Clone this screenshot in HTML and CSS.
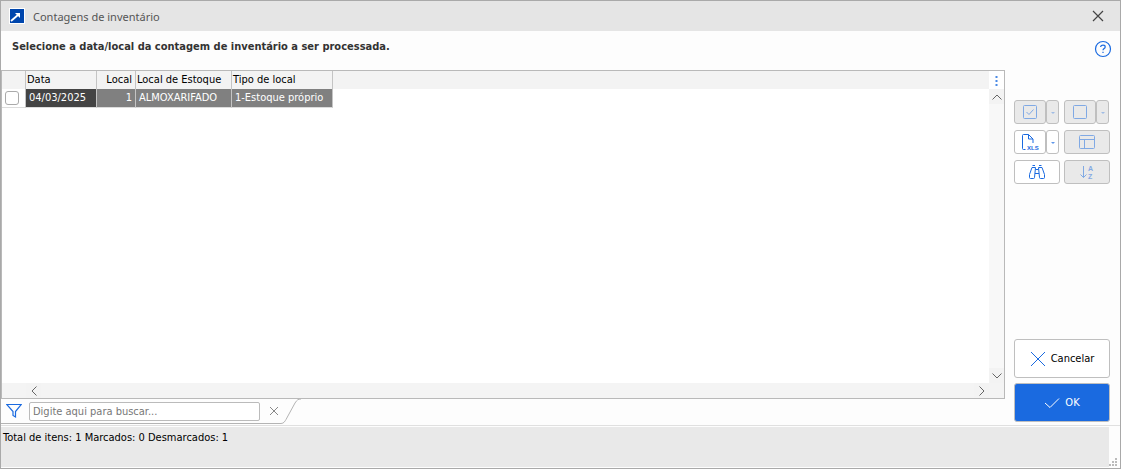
FILE: index.html
```
<!DOCTYPE html>
<html lang="pt-BR">
<head>
    <meta charset="UTF-8">
    <meta name="viewport" content="width=device-width, initial-scale=1.0">
    <title>Contagens de inventário</title>
    <link rel="stylesheet" href="styles.css">
</head>
<body>
    <div class="window">
        <header class="titlebar">
            <svg class="app-icon" width="16" height="16" viewBox="0 0 16 16">
                <rect width="16" height="16" fill="#fff"/>
                <rect x="1" y="1" width="14" height="14" fill="#0046ad"/>
                <path d="M2 13L9.500 6.500" stroke="#fff" stroke-width="1.800" fill="none"/>
                <path d="M6 5h5v5z" fill="#fff"/>
            </svg>
            <h1>Contagens de inventário</h1>
            <button class="close-btn" type="button" aria-label="Fechar">
                <svg width="12" height="12" viewBox="0 0 12 12"><path d="M1 1l10 10M11 1L1 11" stroke="#444" stroke-width="1.200"/></svg>
            </button>
        </header>

        <div class="content">
            <main class="main">
                <p class="prompt">Selecione a data/local da contagem de inventário a ser processada.</p>

                <div class="grid">
                    <div class="grid-view">
                        <div class="grid-data">
                            <table>
                                <thead>
                                    <tr>
                                        <th class="col-check"></th>
                                        <th class="col-date">Data</th>
                                        <th class="col-local num">Local</th>
                                        <th class="col-stock">Local de Estoque</th>
                                        <th class="col-type">Tipo de local</th>
                                    </tr>
                                </thead>
                                <tbody>
                                    <tr>
                                        <td class="check-cell"><input type="checkbox" aria-label="Marcar 04/03/2025"></td>
                                        <td class="focused">04/03/2025</td>
                                        <td class="num">1</td>
                                        <td>ALMOXARIFADO</td>
                                        <td>1-Estoque próprio</td>
                                    </tr>
                                </tbody>
                            </table>
                        </div>
                        <div class="vscroll">
                            <button class="grid-menu" type="button" aria-label="Colunas">
                                <svg width="3" height="12" viewBox="0 0 3 12" fill="#4a8ae6"><path d="M0.500 2h2v2h-2zM0.500 6h2v2h-2zM0.500 10h2v2h-2z"/></svg>
                            </button>
                            <button class="scroll-btn" type="button" aria-label="Rolar para cima">
                                <svg width="10" height="6" viewBox="0 0 10 6"><path d="M0.500 5.500L5 1l4.500 4.500"/></svg>
                            </button>
                            <div class="track"></div>
                            <button class="scroll-btn" type="button" aria-label="Rolar para baixo">
                                <svg width="10" height="6" viewBox="0 0 10 6"><path d="M0.500 0.500L5 5l4.500-4.500"/></svg>
                            </button>
                        </div>
                    </div>
                    <div class="hscroll">
                        <button class="scroll-btn" type="button" aria-label="Rolar para a esquerda">
                            <svg width="6" height="10" viewBox="0 0 6 10"><path d="M5.500 0.500L1 5l4.500 4.500"/></svg>
                        </button>
                        <div class="track"></div>
                        <button class="scroll-btn" type="button" aria-label="Rolar para a direita">
                            <svg width="6" height="10" viewBox="0 0 6 10"><path d="M0.500 0.500L5 5L0.500 9.500"/></svg>
                        </button>
                    </div>
                </div>

                <form class="filter">
                    <div class="filter-body">
                        <svg width="16" height="16" viewBox="0 0 16 16" fill="none" stroke="#1a6ae0" stroke-width="1.200"><path d="M0.700 1.500h14.600L9.500 8.500v5.500l-2.500-1.500V8.500z"/></svg>
                        <input class="search" type="text" aria-label="Buscar" placeholder="Digite aqui para buscar...">
                        <button class="clear-btn" type="button" aria-label="Limpar busca">
                            <svg width="10" height="10" viewBox="0 0 10 10"><path d="M1 1l8 8M9 1L1 9" stroke="#888"/></svg>
                        </button>
                    </div>
                    <svg class="filter-edge" width="20" height="25" viewBox="0 0 20 25" fill="none" stroke="#b4b4b4"><path d="M0 24.500C3 24.500 4 22 5 20.500L14 4C16 1 17 0 20 0"/></svg>
                </form>
            </main>

            <aside class="side">
                <button class="help-btn" type="button" aria-label="Ajuda">
                    <svg width="18" height="18" viewBox="0 0 18 18" fill="none" stroke="#1a6ae0"><circle cx="9" cy="9" r="7.500" stroke-width="1.200"/><path d="M6.700 7V6.500Q7 5.200 9 5.200Q11.200 5.200 11.200 7Q11.200 8 10 8.600Q9 9.100 9 10.300M9 11.700V13" stroke-width="1.200"/></svg>
                </button>

                <div class="tools">
                    <div class="split">
                        <button class="tool" type="button" aria-label="Marcar todos" disabled>
                            <svg width="16" height="16" viewBox="0 0 16 16"><rect x="1.500" y="1.500" width="13" height="13" rx="1"/><path d="M4.500 8l2.500 2.500L11.500 5.500"/></svg>
                        </button>
                        <button class="arrow" type="button" aria-label="Opções de marcar" disabled><svg width="4" height="3" viewBox="0 0 4 3"><path class="solid" d="M0 1h4L2 3z"/></svg></button>
                    </div>
                    <div class="split">
                        <button class="tool" type="button" aria-label="Desmarcar todos" disabled>
                            <svg width="16" height="16" viewBox="0 0 16 16"><rect x="1.500" y="1.500" width="13" height="13" rx="1"/></svg>
                        </button>
                        <button class="arrow" type="button" aria-label="Opções de desmarcar" disabled><svg width="4" height="3" viewBox="0 0 4 3"><path class="solid" d="M0 1h4L2 3z"/></svg></button>
                    </div>
                    <div class="split">
                        <button class="tool" type="button" aria-label="Exportar XLS">
                            <svg width="18" height="18" viewBox="0 0 18 18"><path d="M4.500 16.500H2.500Q1.500 16.500 1.500 15.500V2.500Q1.500 1.500 2.500 1.500H7.500l4.500 4.500V10M7.500 1.500V6H12"/><text x="6" y="17">XLS</text></svg>
                        </button>
                        <button class="arrow" type="button" aria-label="Opções de exportação"><svg width="4" height="3" viewBox="0 0 4 3"><path class="solid" d="M0 1h4L2 3z"/></svg></button>
                    </div>
                    <button class="tool" type="button" aria-label="Layout" disabled>
                        <svg width="16" height="16" viewBox="0 0 16 16"><rect x="0.500" y="1.500" width="15" height="13" rx="1"/><path d="M0.500 5.500h15M5.500 5.500v9"/></svg>
                    </button>
                    <button class="tool" type="button" aria-label="Localizar">
                        <svg width="18" height="16" viewBox="0 0 18 16"><path d="M4 3.500L1.500 10.500V13.500Q1.500 14.500 2.500 14.500H5.500Q6.500 14.500 6.500 13.500L7.500 3.500zM14 3.500l2.500 7V13.500Q16.500 14.500 15.500 14.500H12.500Q11.500 14.500 11.500 13.500L10.500 3.500zM4.500 1.500h2.500M11 1.500h2.500M7.500 5.500h3M7 9.500h4"/></svg>
                    </button>
                    <button class="tool" type="button" aria-label="Ordenar" disabled>
                        <svg width="16" height="18" viewBox="0 0 16 18"><path d="M4.500 3v11.500M1.500 11.500l3 3 3-3"/><text x="9" y="8">A</text><text x="9" y="16">Z</text></svg>
                    </button>
                </div>

                <div class="actions">
                    <button class="btn" type="button">
                        <svg width="16" height="16" viewBox="0 0 16 16"><path d="M1 1l14 14M15 1L1 15"/></svg>Cancelar
                    </button>
                    <button class="btn primary" type="button">
                        <svg width="16" height="16" viewBox="0 0 16 16"><path d="M1 8l5 4.500L15 3.500"/></svg>OK
                    </button>
                </div>
            </aside>
        </div>

        <footer class="status">
            <div class="status-text">Total de itens: 1 Marcados: 0 Desmarcados: 1</div>
            <svg width="9" height="9" viewBox="0 0 9 9" fill="#bbb"><path d="M6 0h2v2h-2zM3 3h2v2h-2zM6 3h2v2h-2zM0 6h2v2h-2zM3 6h2v2h-2zM6 6h2v2h-2z"/></svg>
        </footer>
    </div>
</body>
</html>
```

FILE: styles.css
```
* {
    box-sizing: border-box;
}
body {
    margin: 0;
    padding: 0 14px 7px 0;
    height: 100vh;
    background-color: #fff;
    color: #000;
    font-family: Tahoma, "DejaVu Sans Condensed", "Noto Sans", sans-serif;
    font-size: 11px;
}
button, input {
    font: inherit;
    color: inherit;
    margin: 0;
}
button {
    display: flex;
    align-items: center;
    justify-content: center;
    padding: 0;
    border: none;
    background: none;
}
svg {
    display: block;
    flex: none;
}
.window {
    display: flex;
    flex-direction: column;
    height: 100%;
    border: 1px solid #a9a9a9;
    background-color: #fdfdfd;
}
.titlebar {
    display: flex;
    align-items: center;
    gap: 8px;
    height: 30px;
    padding: 0 14px 0 8px;
    background-color: #e5e5e5;
}
.titlebar h1 {
    flex: 1;
    margin: 0;
    color: #555;
    font-family: "Segoe UI", "Noto Sans", sans-serif;
    font-size: 11px;
    font-weight: normal;
}
.close-btn {
    width: 16px;
    height: 16px;
}
.content {
    display: flex;
    flex: 1;
    min-height: 0;
}
.main {
    display: flex;
    flex: 1;
    flex-direction: column;
    min-width: 0;
}
.prompt {
    height: 39px;
    margin: 0;
    padding: 8px 11px 0;
    color: #333;
    font-weight: bold;
    line-height: 16px;
}

/* grid */
.grid {
    display: flex;
    flex: 1;
    flex-direction: column;
    border: 1px solid #b9b9b9;
    background-color: #fff;
}
.grid-view {
    display: flex;
    flex: 1;
}
.grid-data {
    flex: 1;
    background: linear-gradient(#f3f3f3 18px, #fff 18px);
}
table {
    border-collapse: separate;
    border-spacing: 0;
    table-layout: fixed;
    width: 331px;
}
th, td {
    height: 18px;
    padding: 0 3px 0 1px;
    border-right: 1px solid #c4c4c4;
    font-weight: normal;
    line-height: 16px;
    text-align: left;
    white-space: nowrap;
}
td {
    height: 19px;
    padding: 0 3px;
    border-bottom: 1px solid #dcdcdc;
    background-color: #808080;
    color: #fff;
    line-height: 18px;
}
td.focused {
    background-color: #444;
}
.num {
    text-align: right;
}
.col-check {
    width: 24px;
}
.col-date {
    width: 71px;
}
.col-local {
    width: 39px;
}
.col-stock {
    width: 96px;
}
td.check-cell {
    background-color: #fff;
}
.check-cell input {
    display: block;
    width: 14px;
    height: 14px;
    appearance: none;
    border: 1px solid #aaa;
    border-radius: 3px;
    background-color: #fff;
}
.vscroll {
    display: flex;
    flex-direction: column;
    width: 15px;
    background-color: #f8f8f8;
}
.grid-menu {
    height: 18px;
    background-color: #fff;
}
.scroll-btn {
    width: 15px;
    height: 15px;
    background-color: #f3f3f3;
}
.scroll-btn svg {
    fill: none;
    stroke: #666;
}
.track {
    flex: 1;
}
.hscroll {
    display: flex;
    height: 15px;
    padding: 0 15px 0 24px;
    background-color: #f4f4f4;
}

/* filter */
.filter {
    display: flex;
    height: 26px;
}
.filter-body {
    display: flex;
    align-items: center;
    gap: 7px;
    height: 25px;
    padding-left: 5px;
    border-bottom: 1px solid #b4b4b4;
}
.search {
    width: 231px;
    height: 19px;
    padding: 0 3px;
    border: 1px solid #bbb;
    border-radius: 2px;
    background-color: #fff;
}
.search::placeholder {
    color: #777;
    opacity: 1;
}
.clear-btn {
    width: 14px;
    height: 16px;
}

/* side panel */
.side {
    display: flex;
    flex-direction: column;
    width: 115px;
    padding: 9px 10px 3px 9px;
}
.help-btn {
    align-self: flex-end;
    width: 18px;
    height: 18px;
    margin-right: -2px;
}
.tools {
    display: grid;
    grid-template-columns: 1fr 1fr;
    gap: 6px 4px;
    margin-top: 42px;
}
.split {
    display: flex;
}
.tool, .arrow {
    height: 24px;
    border: 1px solid #bfbfbf;
    border-radius: 3px;
    background-color: #fff;
}
.split .tool {
    width: 32px;
}
.arrow {
    width: 13px;
}
.tools button:disabled {
    background-color: #e9e9e9;
}
.tools svg {
    fill: none;
    stroke: #1a6ae0;
}
.tools .solid, .tools text {
    fill: #1a6ae0;
    stroke: none;
}
.arrow .solid {
    opacity: 0.7;
}
.tools text {
    font-family: "Liberation Sans", sans-serif;
    font-size: 7px;
    font-weight: bold;
}
.split text {
    font-size: 6px;
}
.tools button:disabled svg {
    opacity: 0.5;
}
.actions {
    display: flex;
    flex-direction: column;
    gap: 5px;
    margin-top: auto;
}
.btn {
    gap: 5px;
    height: 39px;
    border: 1px solid #bfbfbf;
    border-radius: 3px;
    background-color: #fff;
}
.btn svg {
    fill: none;
    stroke: #1a6ae0;
}
.btn.primary {
    background-color: #1a6ae0;
    color: #fff;
}
.btn.primary svg {
    stroke: #fff;
}

/* status bar */
.status {
    display: flex;
    align-items: flex-end;
    height: 43px;
    padding: 1px 2px 1px 0;
    border-top: 1px solid #e0e0e0;
}
.status-text {
    flex: 1;
    align-self: stretch;
    padding: 3px 2px;
    background-color: #e9e9e9;
    line-height: 16px;
}
```
